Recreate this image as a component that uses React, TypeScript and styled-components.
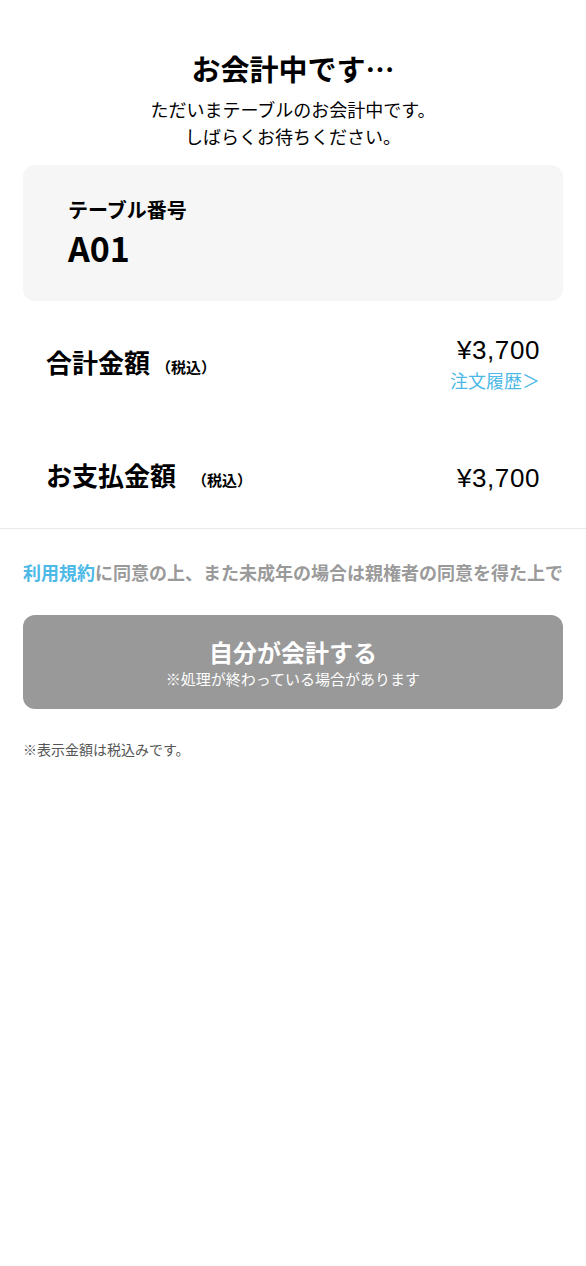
import styled, { createGlobalStyle } from "styled-components";

const GlobalStyle = createGlobalStyle`
  body {
    margin: 0;
    background: #ffffff;
    font-family: "Noto Sans CJK JP", "Noto Sans", sans-serif;
    color: #000000;
  }
`;

const Page = styled.div`
  width: 586px;
  min-height: 1266px;
  background: #ffffff;
  padding-top: 48px;
  box-sizing: border-box;
`;

const Header = styled.header`
  display: flex;
  flex-direction: column;
  align-items: center;
  text-align: center;
`;

const Title = styled.h1`
  margin: 0;
  font-size: 29px;
  line-height: 40px;
  font-weight: 700;
`;

const Lead = styled.p`
  margin: 8px 0 0;
  font-size: 18px;
  line-height: 27px;
`;

const TableCard = styled.section`
  margin: 15px 23px 0;
  padding: 31px 45px 32px;
  background: #f6f6f6;
  border-radius: 12px;
`;

const CardLabel = styled.div`
  font-size: 20px;
  line-height: 28px;
  font-weight: 700;
`;

const TableNo = styled.div`
  margin-top: 3px;
  font-size: 34px;
  line-height: 42px;
  font-weight: 700;
`;

const Amounts = styled.section`
  display: flex;
  flex-direction: column;
  gap: 65px;
  padding: 33px 46px 32px;
  border-bottom: 1px solid #e9e9e9;
`;

const AmountRow = styled.div`
  display: flex;
  justify-content: space-between;
  align-items: center;
`;

const AmountLabel = styled.div<{ $gap: number }>`
  display: flex;
  align-items: baseline;
  gap: ${(p) => p.$gap}px;
  font-size: 26px;
  line-height: 32px;
  font-weight: 700;
`;

const TaxNote = styled.span`
  font-size: 15px;
  font-weight: 700;
`;

const AmountSide = styled.div`
  display: flex;
  flex-direction: column;
  align-items: flex-end;
`;

const Price = styled.div`
  font-family: "Liberation Sans", Arial, sans-serif;
  font-size: 26px;
  line-height: 32px;
  letter-spacing: 0.6px;
`;

const HistoryLink = styled.a`
  font-size: 18px;
  line-height: 28px;
  color: #4cb9e7;
  text-decoration: none;
`;

const Footer = styled.section`
  padding: 30px 23px 0;
`;

const Terms = styled.p`
  margin: 0;
  font-size: 18px;
  line-height: 26px;
  font-weight: 700;
  color: #9a9a9a;
  white-space: nowrap;
`;

const TermsLink = styled.span`
  color: #4cb9e7;
`;

const PayButton = styled.button`
  width: 100%;
  height: 94px;
  margin-top: 30px;
  display: flex;
  flex-direction: column;
  align-items: center;
  justify-content: center;
  border: none;
  border-radius: 12px;
  background: #999999;
  color: #ffffff;
  font-family: inherit;
  cursor: pointer;
`;

const ButtonTitle = styled.span`
  font-size: 24px;
  line-height: 32px;
  font-weight: 700;
`;

const ButtonSub = styled.span`
  margin-top: 1px;
  font-size: 15px;
  line-height: 20px;
`;

const Notice = styled.p`
  margin: 30px 0 0;
  font-size: 14px;
  line-height: 20px;
  color: #555555;
`;

export default function App() {
  return (
    <>
      <GlobalStyle />
      <Page>
        <Header>
          <Title>お会計中です…</Title>
          <Lead>
            ただいまテーブルのお会計中です。
            <br />
            しばらくお待ちください。
          </Lead>
        </Header>

        <TableCard>
          <CardLabel>テーブル番号</CardLabel>
          <TableNo>A01</TableNo>
        </TableCard>

        <Amounts>
          <AmountRow>
            <AmountLabel $gap={6}>
              合計金額<TaxNote>（税込）</TaxNote>
            </AmountLabel>
            <AmountSide>
              <Price>¥3,700</Price>
              <HistoryLink href="#">注文履歴＞</HistoryLink>
            </AmountSide>
          </AmountRow>
          <AmountRow>
            <AmountLabel $gap={16}>
              お支払金額<TaxNote>（税込）</TaxNote>
            </AmountLabel>
            <AmountSide>
              <Price>¥3,700</Price>
            </AmountSide>
          </AmountRow>
        </Amounts>

        <Footer>
          <Terms>
            <TermsLink>利用規約</TermsLink>に同意の上、また未成年の場合は親権者の同意を得た上で
          </Terms>
          <PayButton>
            <ButtonTitle>自分が会計する</ButtonTitle>
            <ButtonSub>※処理が終わっている場合があります</ButtonSub>
          </PayButton>
          <Notice>※表示金額は税込みです。</Notice>
        </Footer>
      </Page>
    </>
  );
}
